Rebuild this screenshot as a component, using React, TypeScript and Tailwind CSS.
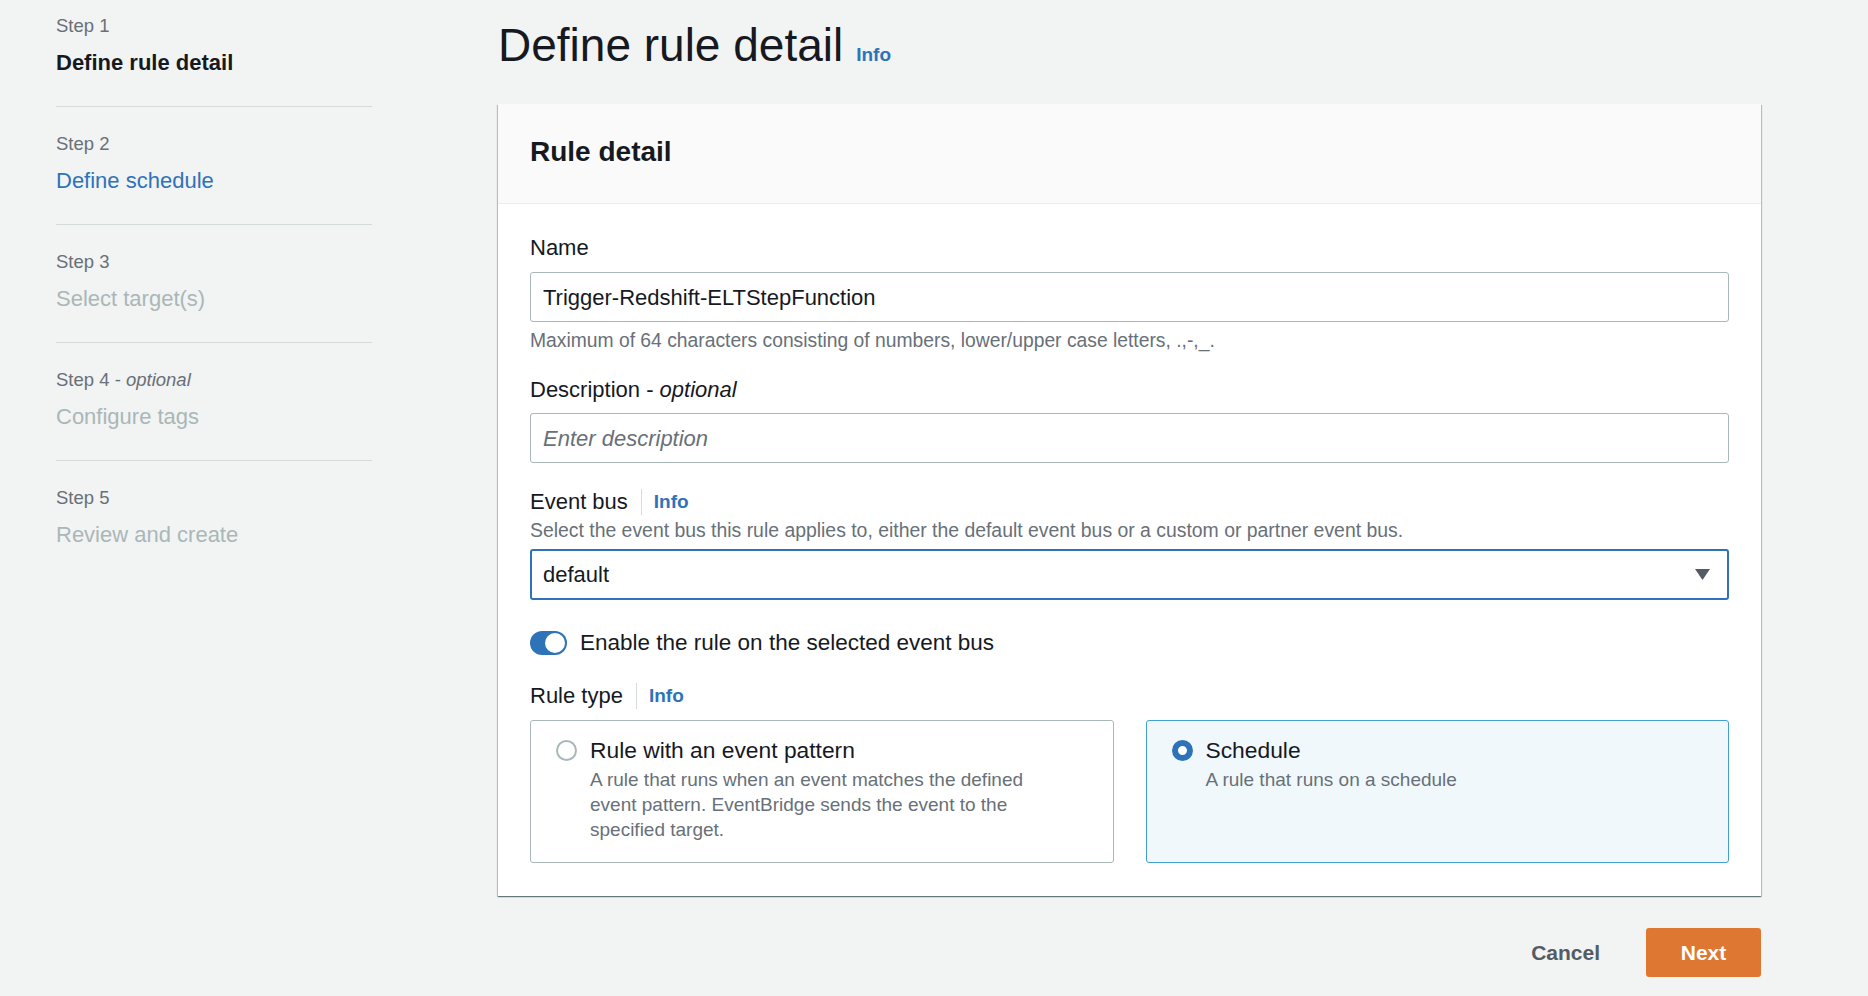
import { type ReactNode } from 'react';

const steps = [
  { label: 'Step 1', title: 'Define rule detail', state: 'current' },
  { label: 'Step 2', title: 'Define schedule', state: 'link' },
  { label: 'Step 3', title: 'Select target(s)', state: 'disabled' },
  { label: 'Step 4', optional: true, title: 'Configure tags', state: 'disabled' },
  { label: 'Step 5', title: 'Review and create', state: 'disabled' },
];

function InfoLink() {
  return (
    <span className="ml-[13px] border-l border-[#d5dbdb] pl-[12px] text-[19px] font-bold leading-[26px] text-[#2e73b8]">
      Info
    </span>
  );
}

function Label({ children, info }: { children: ReactNode; info?: boolean }) {
  return (
    <div className="flex items-center text-[22px] leading-[28px] text-[#16191f]">
      <span>{children}</span>
      {info && <InfoLink />}
    </div>
  );
}

function Radio({ checked }: { checked: boolean }) {
  return checked ? (
    <span className="mt-[4px] h-[21px] w-[21px] shrink-0 rounded-full border-[6px] border-[#2e73b8] bg-white" />
  ) : (
    <span className="mt-[4px] h-[21px] w-[21px] shrink-0 rounded-full border-2 border-[#aab7b8] bg-white" />
  );
}

function TypeCard({
  title,
  desc,
  checked,
}: {
  title: string;
  desc: string;
  checked: boolean;
}) {
  return (
    <div
      className={
        checked
          ? 'flex gap-[13px] rounded-[3px] border border-[#44a1cf] bg-[#f1f8fc] pl-[25px] pr-6 pt-[15px] pb-[20px]'
          : 'flex gap-[13px] rounded-[3px] border border-[#aab7b8] bg-white pl-[25px] pr-6 pt-[15px] pb-[20px]'
      }
    >
      <Radio checked={checked} />
      <div>
        <div className="text-[22.8px] leading-[28px] text-[#16191f]">{title}</div>
        <div className="mt-[3px] max-w-[460px] text-[19px] leading-[25px] text-[#687078]">{desc}</div>
      </div>
    </div>
  );
}

export default function App() {
  return (
    <div
      className="flex min-h-screen w-full bg-[#f2f3f3] text-[#16191f]"
      style={{ fontFamily: '"Liberation Sans", Arial, sans-serif' }}
    >
      <nav className="ml-[56px] w-[316px] shrink-0 pt-[14px]">
        {steps.map((s, i) => (
          <div
            key={s.label}
            className={
              i < steps.length - 1
                ? 'border-b border-[#d5dbdb] pb-[29px] ' + (i === 0 ? '' : 'pt-[25px]')
                : 'pt-[25px]'
            }
          >
            <div className="text-[18.5px] leading-[24px] text-[#687078]">
              {s.label}
              {s.optional && (
                <>
                  {' - '}
                  <i>optional</i>
                </>
              )}
            </div>
            <div
              className={
                s.state === 'current'
                  ? 'mt-[11px] text-[22px] font-bold leading-[28px] text-[#16191f]'
                  : s.state === 'link'
                    ? 'mt-[11px] text-[22px] leading-[28px] text-[#2e73b8]'
                    : 'mt-[11px] text-[22px] leading-[28px] text-[#aab7b8]'
              }
            >
              {s.title}
            </div>
          </div>
        ))}
      </nav>

      <main className="ml-[126px] w-[1263px] shrink-0 pt-[17px]">
        <div className="flex items-baseline gap-[13px]">
          <h1 className="text-[46px] font-normal leading-[56px] text-[#16191f]">Define rule detail</h1>
          <span className="text-[19px] font-bold text-[#2e73b8]">Info</span>
        </div>

        <section className="mt-[31px] bg-white shadow-[0_1px_1px_0_rgba(0,28,36,0.35),1px_1px_1px_0_rgba(0,28,36,0.2),-1px_1px_1px_0_rgba(0,28,36,0.2)]">
          <header className="flex h-[100px] items-center border-b border-[#eaeded] bg-[#fafafa] px-[32px] pb-[4px]">
            <h2 className="text-[28px] font-bold leading-[34px]">Rule detail</h2>
          </header>

          <div className="px-[32px] pt-[30px] pb-[33px]">
            <Label>Name</Label>
            <div className="mt-[10px] flex h-[50px] items-center rounded-[3px] border border-[#aab7b8] px-[12px] text-[22px]">
              Trigger-Redshift-ELTStepFunction
            </div>
            <div className="mt-[7px] text-[19.3px] leading-[24px] text-[#687078]">
              Maximum of 64 characters consisting of numbers, lower/upper case letters, .,-,_.
            </div>

            <div className="mt-[23px]">
              <Label>
                Description - <i>optional</i>
              </Label>
            </div>
            <div className="mt-[9px] flex h-[50px] items-center rounded-[3px] border border-[#aab7b8] px-[12px] text-[22px] italic text-[#687078]">
              Enter description
            </div>

            <div className="mt-[25px]">
              <Label info>Event bus</Label>
            </div>
            <div className="mt-[2px] text-[19.4px] leading-[24px] text-[#687078]">
              Select the event bus this rule applies to, either the default event bus or a custom or partner event bus.
            </div>
            <div className="mt-[7px] flex h-[51px] items-center justify-between rounded-[3px] border-2 border-[#2e73b8] pl-[11px] pr-[16px] text-[22px]">
              <span>default</span>
              <svg width="17" height="13" viewBox="0 0 17 13">
                <path d="M1 1h15L8.5 12z" fill="#545b64" />
              </svg>
            </div>

            <div className="mt-[29px] flex items-center gap-[13px]">
              <span className="relative h-[24px] w-[37px] rounded-full bg-[#2e73b8]">
                <span className="absolute right-[2px] top-[2px] h-[20px] w-[20px] rounded-full bg-white" />
              </span>
              <span className="text-[22.5px] leading-[28px]">Enable the rule on the selected event bus</span>
            </div>

            <div className="mt-[25px]">
              <Label info>Rule type</Label>
            </div>
            <div className="mt-[10px] grid grid-cols-2 gap-[32px]">
              <TypeCard
                checked={false}
                title="Rule with an event pattern"
                desc="A rule that runs when an event matches the defined event pattern. EventBridge sends the event to the specified target."
              />
              <TypeCard checked title="Schedule" desc="A rule that runs on a schedule" />
            </div>
          </div>
        </section>

        <div className="mt-[32px] flex items-center justify-end gap-[26px]">
          <button className="px-[20px] text-[21px] font-bold text-[#545b64]">Cancel</button>
          <button className="h-[49px] w-[115px] rounded-[3px] bg-[#dd7731] text-[21px] font-bold text-white">
            Next
          </button>
        </div>
      </main>
    </div>
  );
}
